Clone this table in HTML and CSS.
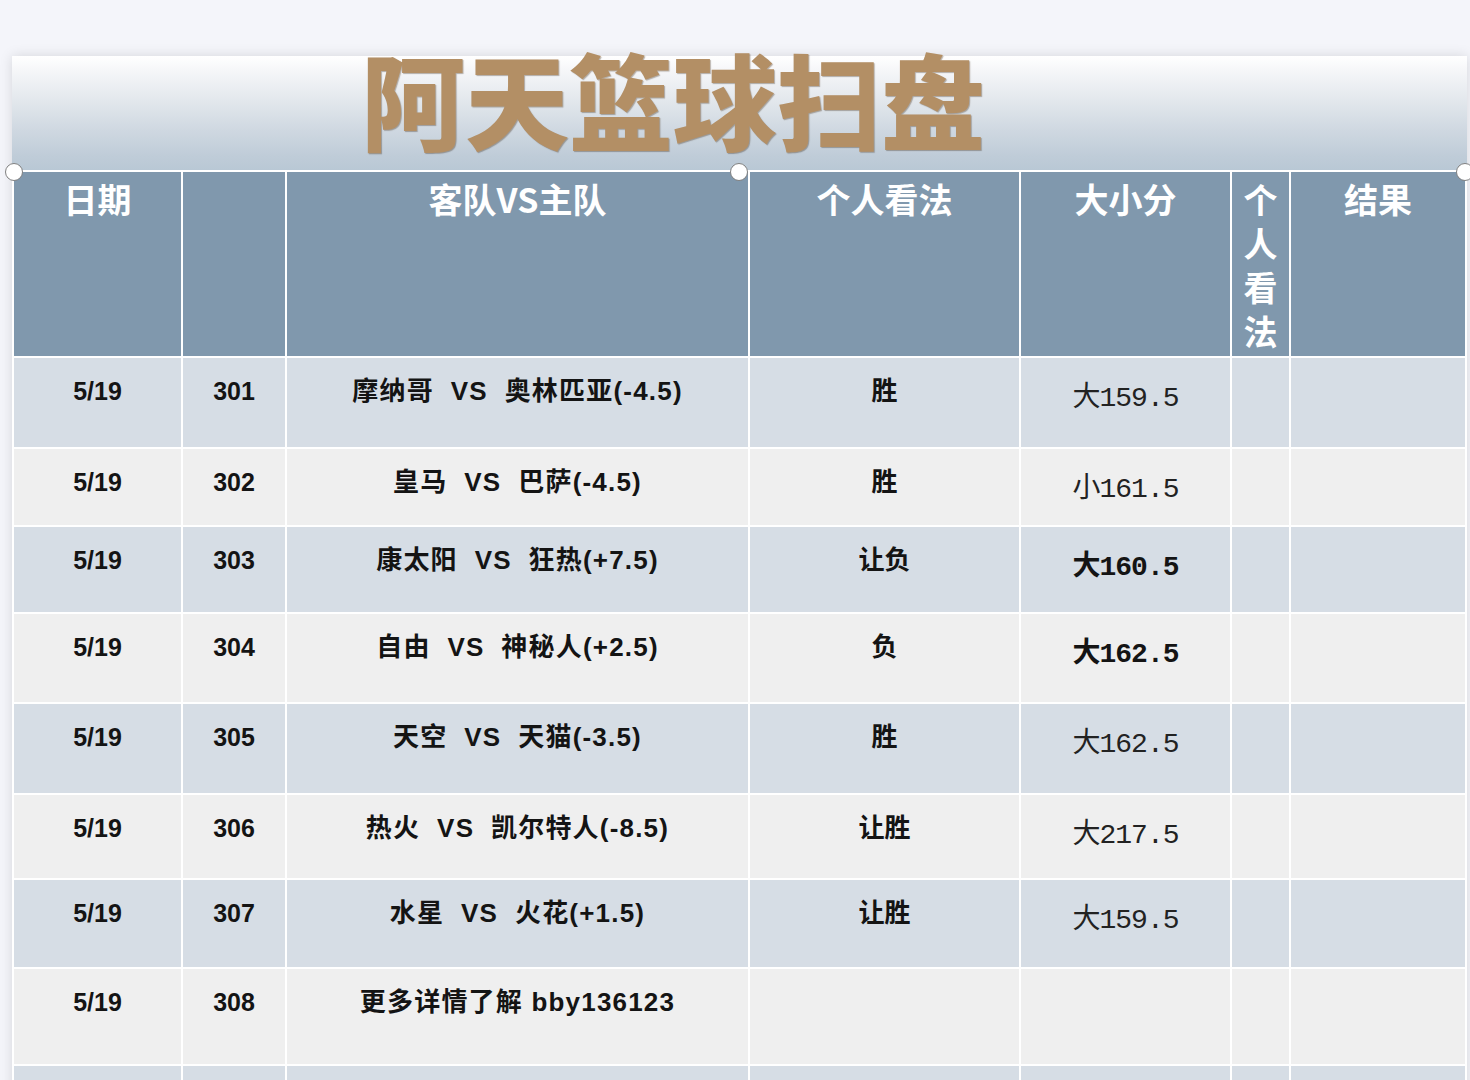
FILE: index.html
```html
<!DOCTYPE html>
<html lang="zh-CN">
<head>
<meta charset="utf-8">
<title>阿天篮球扫盘</title>
<link rel="stylesheet" href="styles.css">
</head>
<body>
<div class="panel">
  <div class="banner">
    <h1 class="title">阿天篮球扫盘</h1>
  </div>
  <table class="sheet">
    <colgroup>
      <col class="w-date"><col class="w-no"><col class="w-match"><col class="w-view"><col class="w-total"><col class="w-vert"><col class="w-result">
    </colgroup>
    <thead>
      <tr class="head">
        <th>日期</th><th></th><th>客队VS主队</th><th>个人看法</th><th>大小分</th><th class="vert">个人看法</th><th>结果</th>
      </tr>
    </thead>
    <tbody>
      <tr class="r blue h89"><td class="num">5/19</td><td class="num">301</td><td class="match">摩纳哥  VS  奥林匹亚(-4.5)</td><td class="view">胜</td><td class="total">大159.5</td><td></td><td></td></tr>
      <tr class="r gray h76"><td class="num">5/19</td><td class="num">302</td><td class="match">皇马  VS  巴萨(-4.5)</td><td class="view">胜</td><td class="total">小161.5</td><td></td><td></td></tr>
      <tr class="r blue h85"><td class="num">5/19</td><td class="num">303</td><td class="match">康太阳  VS  狂热(+7.5)</td><td class="view">让负</td><td class="total strong">大160.5</td><td></td><td></td></tr>
      <tr class="r gray h88"><td class="num">5/19</td><td class="num">304</td><td class="match">自由  VS  神秘人(+2.5)</td><td class="view">负</td><td class="total strong">大162.5</td><td></td><td></td></tr>
      <tr class="r blue h89"><td class="num">5/19</td><td class="num">305</td><td class="match">天空  VS  天猫(-3.5)</td><td class="view">胜</td><td class="total">大162.5</td><td></td><td></td></tr>
      <tr class="r gray h83"><td class="num">5/19</td><td class="num">306</td><td class="match">热火  VS  凯尔特人(-8.5)</td><td class="view">让胜</td><td class="total">大217.5</td><td></td><td></td></tr>
      <tr class="r blue h87"><td class="num">5/19</td><td class="num">307</td><td class="match">水星  VS  火花(+1.5)</td><td class="view">让胜</td><td class="total">大159.5</td><td></td><td></td></tr>
      <tr class="r gray h95"><td class="num">5/19</td><td class="num">308</td><td class="match">更多详情了解 bby136123</td><td class="view"></td><td class="total"></td><td></td><td></td></tr>
      <tr class="r blue h89"><td></td><td></td><td></td><td></td><td></td><td></td><td></td></tr>
    </tbody>
  </table>
  <span class="handle h-left"></span>
  <span class="handle h-mid"></span>
  <span class="handle h-right"></span>
</div>
</body>
</html>
```

FILE: styles.css
```css
html, body {
  margin: 0;
  padding: 0;
  overflow: hidden;
  height: 1080px;
}
body {
  background: #f4f5fa;
  font-family: "Liberation Sans", "Noto Sans CJK SC", sans-serif;
}
.panel {
  position: relative;
  margin: 56px 0 0 12px;
  width: 1455px;
  background: #fff;
  box-shadow: 0 0 12px rgba(0, 0, 0, 0.13);
}
.banner {
  height: 114px;
  display: flex;
  align-items: flex-start;
  background: linear-gradient(to bottom, #ffffff 0%, #f6f7f9 12%, #e2e7ec 40%, #cfd8e1 65%, #bfccd8 88%, #b9c8d5 100%);
}
.title {
  margin: -10px 0 0 349px;
  font-family: "Noto Sans CJK SC", sans-serif;
  font-weight: 900;
  font-size: 104px;
  line-height: 1;
  letter-spacing: 0;
  color: #b38f65;
  text-shadow: 1px 1px 1px rgba(60, 40, 20, 0.35);
  white-space: nowrap;
}
.sheet {
  table-layout: fixed;
  width: 1455px;
  border-collapse: separate;
  border-spacing: 2px;
  background: #ffffff;
}
.w-date { width: 167px; }
.w-no { width: 102px; }
.w-match { width: 461px; }
.w-view { width: 269px; }
.w-total { width: 209px; }
.w-vert { width: 57px; }
.w-result { width: 174px; }

.head { height: 184px; }
.head th {
  background: #8098ad;
  color: #ffffff;
  font-family: "Noto Sans CJK SC", sans-serif;
  font-weight: 700;
  font-size: 34px;
  line-height: 44px;
  vertical-align: top;
  padding: 5px 0 0;
  text-align: center;
  white-space: nowrap;
}
.head th.vert {
  white-space: normal;
  word-break: break-all;
  padding: 5px 10px 0;
}
.h89 { height: 89px; }
.h76 { height: 76px; }
.h85 { height: 85px; }
.h88 { height: 88px; }
.h83 { height: 83px; }
.h87 { height: 87px; }
.h95 { height: 95px; }
.blue td { background: #d6dde5; }
.gray td { background: #efefef; }
.r td {
  vertical-align: top;
  text-align: center;
  padding: 18px 0 0;
  font-size: 26px;
  line-height: 30px;
  color: #141414;
  font-weight: 700;
  white-space: pre;
  font-family: "Liberation Sans", "Noto Sans CJK SC", sans-serif;
}
.r td.num {
  font-size: 25px;
}
.r td.match {
  letter-spacing: 1.2px;
}
.r td.total {
  padding-top: 26px;
  font-family: "Liberation Mono", "Noto Sans CJK SC", monospace;
  font-size: 28px;
  font-weight: 400;
  color: #222;
  letter-spacing: -1px;
}
.r td.total.strong {
  font-weight: 700;
  color: #141414;
}
.handle {
  position: absolute;
  top: 107px;
  width: 16px;
  height: 16px;
  border-radius: 50%;
  background: #fff;
  border: 1.5px solid #808080;
}
.h-left { left: -7px; }
.h-mid { left: 718px; }
.h-right { left: 1444px; }
```
